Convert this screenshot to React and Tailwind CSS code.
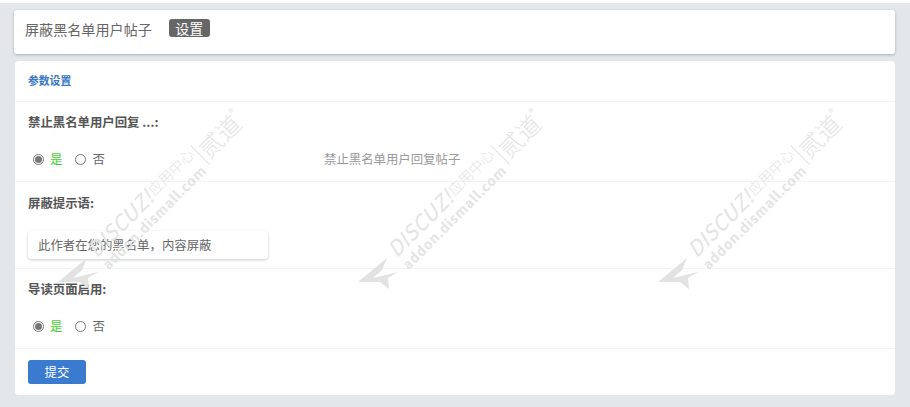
const font = { fontFamily: '"Noto Sans CJK SC", "Liberation Sans", sans-serif' };

function Watermark({ className }) {
  return (
    <div className={`absolute top-0 h-[407px] w-[200px] ${className}`}>
      <svg className="absolute left-0 top-[250px]" width="44" height="42" viewBox="0 0 44 42">
        <path d="M2 32 L31 8 L26 20 L17 28 L42 22 L32 28 L33 39 L24 32 Z" fill="#e2e2e2" />
      </svg>
      <div className="absolute left-[27px] top-[245px] flex origin-top-left -rotate-45 items-center whitespace-nowrap text-[#e4e4e4]">
        <div className="flex flex-col">
          <div className="flex h-[21px] items-center">
            <span className="text-[21px] font-normal italic leading-none tracking-[0.4px]">DISCUZ!</span>
            <span className="ml-[1px] text-[14.5px] font-light leading-none">应用中心</span>
          </div>
          <span className="mt-[2px] text-[13.5px] font-bold leading-[15px] tracking-[0.7px]">addon.dismall.com</span>
        </div>
        <span className="ml-[3px] h-[27px] w-px bg-[#e0e0e0]" />
        <span className="ml-[3px] text-[24px] font-light leading-none">贰道</span>
        <span className="mb-[16px] text-[10px] leading-none">®</span>
      </div>
    </div>
  );
}

function Radios() {
  return (
    <div className="flex h-[22px] items-center pl-[5px] text-[12.4px] text-[#666]">
      <span className="flex h-[11px] w-[11px] items-center justify-center rounded-full border border-[#777]">
        <span className="h-[7px] w-[7px] rounded-full bg-[#777]" />
      </span>
      <span className="ml-[6px] text-[#3fd32f]">是</span>
      <span className="ml-[13px] h-[11px] w-[11px] rounded-full border border-[#777]" />
      <span className="ml-[6px]">否</span>
    </div>
  );
}

function Label({ children }) {
  return <div className="text-[12.4px] font-bold leading-[16px] text-[#555]">{children}</div>;
}

export default function App() {
  return (
    <div style={font} className="relative h-[407px] w-[910px] overflow-hidden bg-[#e4e7ea] pt-[10px]">
      <div className="absolute left-0 top-0 h-[3px] w-full bg-white" />
      <div className="ml-[14px] mr-[15px] flex h-[44px] items-start rounded-[3px] bg-white pl-[11px] pt-[9px] shadow-[0_1px_3px_rgba(0,0,0,0.25)]">
        <span className="text-[14.1px] leading-[20px] text-[#666]">屏蔽黑名单用户帖子</span>
        <span className="ml-[17px] flex h-[18px] w-[41px] items-center justify-center rounded-[3px] bg-[#666] text-[14px] leading-none text-white">设置</span>
      </div>

      <div className="ml-[15px] mr-[15px] mt-[7px] h-[334px] rounded-[4px] bg-white">
        <div className="flex h-[41px] items-center border-b border-[#eef5f5] pb-[1px] pl-[13px] text-[10.8px] font-bold text-[#3a78c4]">参数设置</div>

        <div className="h-[80px] border-b border-[#f2f4f4] px-[13px] pt-[12px]">
          <Label>禁止黑名单用户回复 ...:</Label>
          <div className="mt-[18px] flex items-center">
            <div className="w-[296px]"><Radios /></div>
            <span className="text-[12.4px] leading-[22px] text-[#999]">禁止黑名单用户回复帖子</span>
          </div>
        </div>

        <div className="h-[87px] border-b border-[#eef5f5] px-[13px] pt-[13px]">
          <Label>屏蔽提示语:</Label>
          <div className="mt-[20px] flex h-[28px] w-[240px] items-center rounded-[3px] bg-white pl-[10px] text-[12.4px] text-[#666] shadow-[0_1px_3px_rgba(0,0,0,0.2)]">此作者在您的黑名单，内容屏蔽</div>
        </div>

        <div className="h-[80px] border-b border-[#eef5f5] px-[13px] pt-[12px]">
          <Label>导读页面启用:</Label>
          <div className="mt-[18px]"><Radios /></div>
        </div>

        <div className="pl-[13px] pt-[11px]">
          <button className="flex h-[24px] w-[58px] items-center justify-center rounded-[3px] bg-[#3a7bd0] text-[12.4px] text-white">提交</button>
        </div>
      </div>

      <div className="pointer-events-none absolute inset-0">
        <Watermark className="left-[56px]" />
        <Watermark className="left-[356px]" />
        <Watermark className="left-[656px]" />
      </div>
    </div>
  );
}
